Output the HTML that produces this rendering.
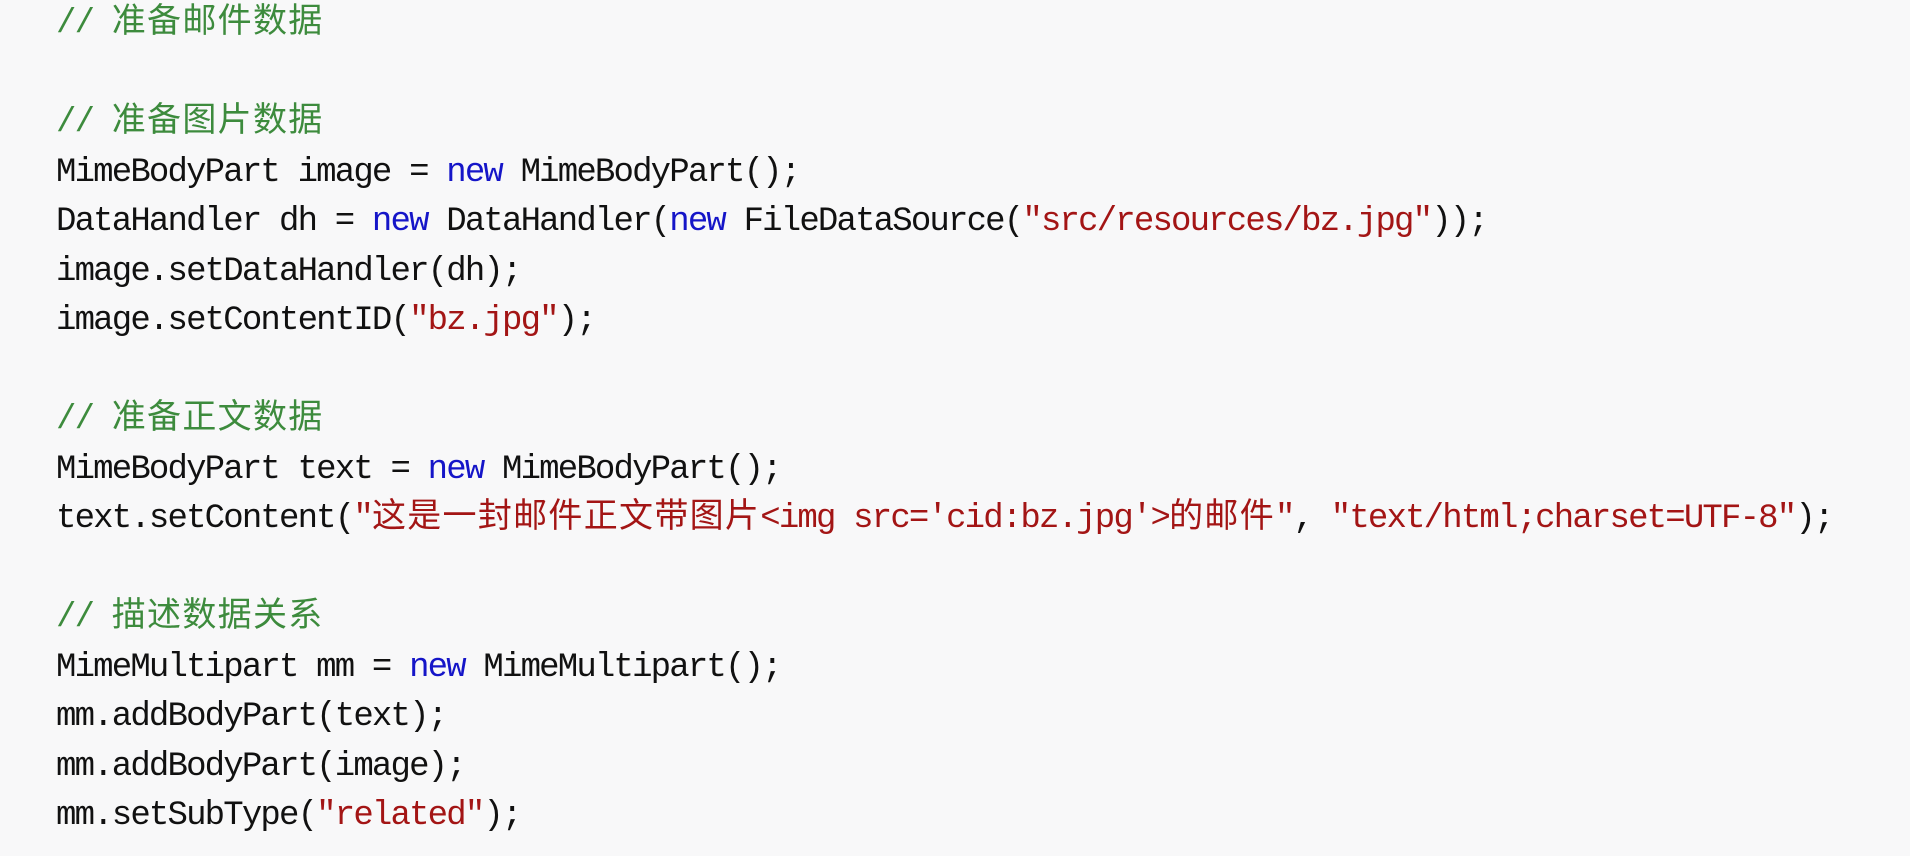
<!DOCTYPE html>
<html><head><meta charset="utf-8"><style>
html,body{margin:0;padding:0;background:#f8f8f9;width:1910px;height:856px;overflow:hidden}
pre{margin:0;position:absolute;left:56px;top:0px;font-family:"Liberation Mono","Noto Sans CJK SC",monospace;font-size:34px;letter-spacing:-1.82px;line-height:49.5px;color:#111}
.c{color:#3d8b3d}.k{color:#1515c8}.s{color:#a31515}
.z{letter-spacing:1.3px}
</style></head><body><pre><span class="c">// <span class="z">准备邮件数据</span></span>

<span class="c">// <span class="z">准备图片数据</span></span>
MimeBodyPart image = <span class="k">new</span> MimeBodyPart();
DataHandler dh = <span class="k">new</span> DataHandler(<span class="k">new</span> FileDataSource(<span class="s">"src/resources/bz.jpg"</span>));
image.setDataHandler(dh);
image.setContentID(<span class="s">"bz.jpg"</span>);

<span class="c">// <span class="z">准备正文数据</span></span>
MimeBodyPart text = <span class="k">new</span> MimeBodyPart();
text.setContent(<span class="s">"<span class="z">这是一封邮件正文带图片</span>&lt;img src='cid:bz.jpg'&gt;<span class="z">的邮件</span>"</span>, <span class="s">"text/html;charset=UTF-8"</span>);

<span class="c">// <span class="z">描述数据关系</span></span>
MimeMultipart mm = <span class="k">new</span> MimeMultipart();
mm.addBodyPart(text);
mm.addBodyPart(image);
mm.setSubType(<span class="s">"related"</span>);
</pre></body></html>
